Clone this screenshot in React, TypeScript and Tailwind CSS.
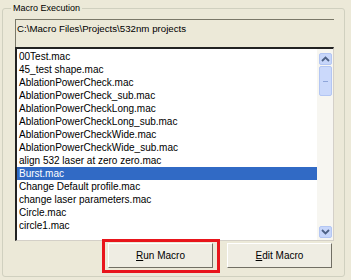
import React from "react";

const items = [
  "00Test.mac",
  "45_test shape.mac",
  "AblationPowerCheck.mac",
  "AblationPowerCheck_sub.mac",
  "AblationPowerCheckLong.mac",
  "AblationPowerCheckLong_sub.mac",
  "AblationPowerCheckWide.mac",
  "AblationPowerCheckWide_sub.mac",
  "align 532 laser at zero zero.mac",
  "Burst.mac",
  "Change Default profile.mac",
  "change laser parameters.mac",
  "Circle.mac",
  "circle1.mac",
];

function ArrowUp() {
  return (
    <svg width="9" height="6" viewBox="0 0 9 6">
      <path d="M1 5 L4.5 1.5 L8 5" fill="none" stroke="#4D6185" strokeWidth="1.8" />
    </svg>
  );
}
function ArrowDown() {
  return (
    <svg width="9" height="6" viewBox="0 0 9 6">
      <path d="M1 1 L4.5 4.5 L8 1" fill="none" stroke="#4D6185" strokeWidth="1.8" />
    </svg>
  );
}

export default function App() {
  return (
    <div
      className="w-[351px] h-[280px] bg-[#ECE9D8] pt-[8px] pl-[2px] overflow-hidden text-black"
      style={{ fontFamily: '"Liberation Sans", Arial, sans-serif' }}
    >
      <div className="relative w-[343px] h-[269px] border border-[#D0D0BF] rounded-[3px] pt-[10px] pl-[12px]">
        <div className="absolute left-[8px] top-[-7px] bg-[#ECE9D8] px-[2px] text-[9px] leading-[12px]">
          Macro Execution
        </div>
        {/* path textbox */}
        <div className="w-[319px] h-[28px] border-t border-l border-[#7A7868] pl-[1px] pt-[3px] text-[9.7px] leading-[12px]">
          C:\Macro Files\Projects\532nm projects
        </div>
        {/* listbox */}
        <div className="w-[319px] h-[194px] border-t-2 border-l-2 border-t-[#222] border-l-[#222] border-r border-b border-r-[#D4D0C8] border-b-[#D4D0C8] bg-white flex">
          <div className="flex-1 flex flex-col pt-[1px]">
            {items.map((t) => (
              <div
                key={t}
                className={
                  "h-[13px] leading-[13px] text-[10px] pl-[2px] whitespace-nowrap overflow-hidden " +
                  (t === "Burst.mac" ? "bg-[#316AC5] text-white" : "")
                }
              >
                {t}
              </div>
            ))}
          </div>
          <div className="w-[16px] h-full bg-[#F7F6F1] flex flex-col items-center pt-[4px] pb-[2px]">
            <div className="w-[13px] h-[12px] rounded-[2px] bg-[#C7D6FA] border border-[#B3C6F3] flex items-center justify-center">
              <ArrowUp />
            </div>
            <div className="w-[13px] h-[30px] mt-[1px] rounded-[2px] bg-[#CBD9FB] border border-[#B3C6F3] flex items-center justify-center">
              <div className="w-[5px] h-[1px] bg-[#8FA6DA]" />
            </div>
            <div className="flex-1" />
            <div className="w-[13px] h-[12px] rounded-[2px] bg-[#C7D6FA] border border-[#B3C6F3] flex items-center justify-center">
              <ArrowDown />
            </div>
          </div>
        </div>
        {/* buttons */}
        <div className="flex mt-[2px] pl-[93px] gap-[14px]">
          <div className="relative">
            <div className="w-[105px] h-[25px] border border-t-white border-l-white border-r-[#716F64] border-b-[#716F64] bg-[#EFEDE3] flex items-center justify-center text-[10px]">
              <span>
                <span className="underline">R</span>un Macro
              </span>
            </div>
            <div className="absolute left-[-6px] top-[-4px] w-[118px] h-[34px] border-[3px] border-[#E8151B] pointer-events-none" />
          </div>
          <div className="w-[105px] h-[25px] border border-t-white border-l-white border-r-[#716F64] border-b-[#716F64] bg-[#EFEDE3] flex items-center justify-center text-[10px]">
            <span>
              <span className="underline">E</span>dit Macro
            </span>
          </div>
        </div>
      </div>
    </div>
  );
}
